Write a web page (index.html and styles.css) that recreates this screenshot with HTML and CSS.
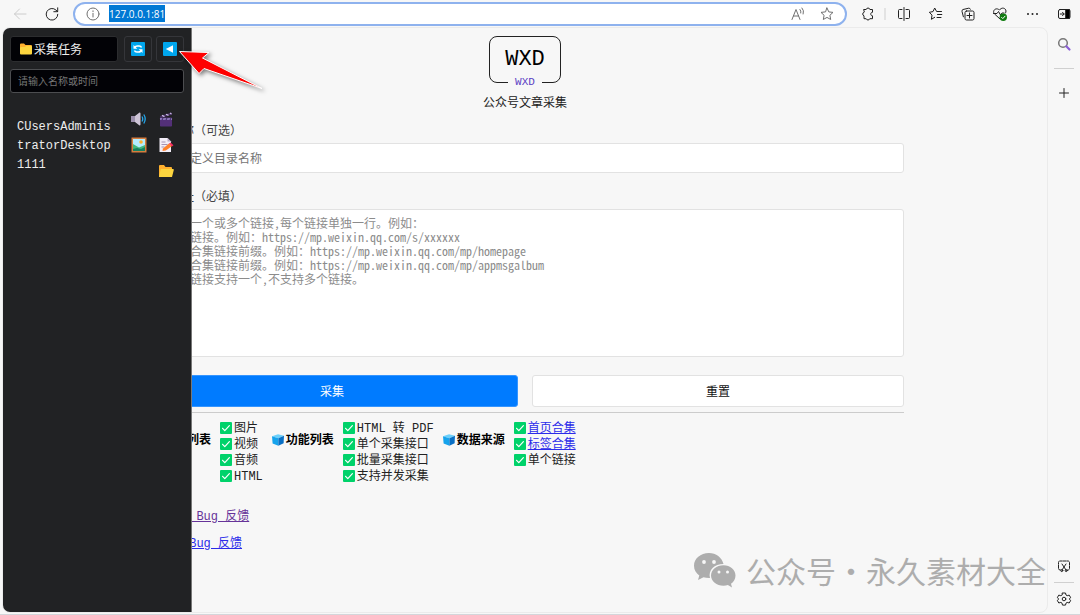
FILE: index.html
```html
<!DOCTYPE html>
<html lang="zh-CN">
<head>
    <meta charset="UTF-8">
    <meta name="viewport" content="width=device-width, initial-scale=1.0">
    <title>公众号文章采集</title>
    <link rel="stylesheet" href="styles.css">
</head>
<body>
    <!-- shared icons -->
    <svg class="sprite" aria-hidden="true">
        <symbol id="check" viewBox="0 0 12 12">
            <rect width="12" height="12" rx="1" fill="#00d26a"></rect>
            <path d="M2.6 6.3l2.2 2.3 4.6-5" fill="none" stroke="#fff" stroke-width="1.2" stroke-linecap="round" stroke-linejoin="round"></path>
        </symbol>
        <symbol id="cube" viewBox="0 0 12 12">
            <path d="M0 2.2L6 .2l6 1.600-5.600 2.500z" fill="#6cd0fb"></path>
            <path d="M0 2.2l6.400 2.100v7.500L.6 9.600z" fill="#16a3ec"></path>
            <path d="M12 1.800l-.4 7.400-5.200 2.600V4.300z" fill="#0a6fc4"></path>
        </symbol>
    </svg>

    <header class="toolbar">
        <button class="tool" title="返回">
            <svg class="icon faded" viewBox="0 0 16 16"><path d="M14 8H2.5M7.5 3L2.5 8l5 5"></path></svg>
        </button>
        <button class="tool" title="刷新">
            <svg class="icon" viewBox="0 0 16 16"><path d="M13.8 8.3A5.8 5.8 0 1 1 12 4.1L13.6 5.600M13.700 1.800v3.900h-3.900"></path></svg>
        </button>
        <div class="address">
            <svg class="icon gray" viewBox="0 0 16 16"><circle cx="8" cy="8" r="6"></circle><path d="M8 7.300v3.700M8 4.800v.8"></path></svg>
            <input class="url" type="text" value="127.0.0.1:81" aria-label="地址">
            <button class="address-tool" title="朗读">
                <svg class="icon gray" viewBox="0 0 16 16"><path d="M2 13.500L6 3.500l4 10M3.500 10h5M10 3.500q1.300 1.500.8 3.500M12 2q2.400 2.500 1.200 6"></path></svg>
            </button>
            <button class="address-tool" title="收藏">
                <svg class="icon gray" viewBox="0 0 16 16"><path d="M8 2l1.800 3.900 4.200.5-3.100 2.900.8 4.200L8 11.400l-3.700 2.100.8-4.200L2 6.400l4.200-.5z"></path></svg>
            </button>
        </div>
        <button class="tool" title="扩展">
            <svg class="icon" viewBox="0 0 16 16"><path d="M4 3.500h2.200a1.900 1.900 0 0 1 3.700 0h2.600v2.800c-2.300-.2-2.300 3.700 0 3.500v2.900H9.800a1.900 1.900 0 0 1-3.600 0H4V9.800a1.900 1.900 0 0 1 0-3.600z"></path></svg>
        </button>
        <span class="divider"></span>
        <button class="tool" title="分屏">
            <svg class="icon" viewBox="0 0 16 16"><path d="M6 3.500H3.500a1 1 0 0 0-1 1v7a1 1 0 0 0 1 1H6M10 3.500h2.500a1 1 0 0 1 1 1v7a1 1 0 0 1-1 1H10M8 1.500v13"></path></svg>
        </button>
        <button class="tool" title="收藏夹">
            <svg class="icon" viewBox="0 0 16 16"><path d="M13.500 5.500H8.600L6.700 2 5 5.600l-3.700.7 2.700 2.800-.6 4.200 3.300-2M9.500 8.500h4.300M9 11.500h4"></path></svg>
        </button>
        <button class="tool" title="集锦">
            <svg class="icon" viewBox="0 0 16 16"><rect x="5" y="5" width="9" height="9" rx="1.500"></rect><path d="M9.500 7v5M7 9.500h5M3.400 10.800L2 5.400Q1.700 4 3 3.500l5.700-1.300q1.300-.2 1.700 1"></path></svg>
        </button>
        <button class="tool" title="浏览器概要">
            <svg class="icon" viewBox="0 0 16 16"><path d="M8 13L2.400 7.800C-.1 5 3.800.8 7.400 4 11-.2 15.800 3.500 13.500 7M1.500 7.500H5l1.500-2 2 3.500L10 7h2"></path><circle cx="11.300" cy="11.300" r="3.700" fill="#107c10" stroke="none"></circle><path d="M9.600 11.400l1.200 1.200 2.200-2.400" stroke="#fff"></path></svg>
        </button>
        <button class="tool" title="更多">
            <svg class="icon" viewBox="0 0 16 16"><g fill="#222" stroke="none"><circle cx="4" cy="8" r="1"></circle><circle cx="8.500" cy="8" r="1"></circle><circle cx="13" cy="8" r="1"></circle></g></svg>
        </button>
        <button class="tool" title="侧栏">
            <svg class="icon" viewBox="0 0 16 16"><rect x="2.500" y="3.500" width="11.500" height="9" rx="1.500"></rect><path d="M10 3.500h3.500v9H10z" fill="#000"></path><path d="M4.300 8h3.700M6.500 6.300L8.200 8 6.500 9.700"></path></svg>
        </button>
    </header>

    <div class="window">
        <div class="viewport">
            <main class="page">
                <div class="brand">
                    <div class="logo">WXD<span class="logo-tag">WXD</span></div>
                    <p class="caption">公众号文章采集</p>
                </div>

                <form>
                    <label class="label" for="name">目录名称（可选）</label>
                    <input class="field" id="name" type="text" placeholder="可以自定义目录名称">

                    <label class="label" for="links">文章地址（必填）</label>
                    <textarea class="field links" id="links" placeholder="请输入一个或多个链接，每个链接单独一行。例如：
1.单个链接。例如：https://mp.weixin.qq.com/s/xxxxxx
2.首页合集链接前缀。例如：https://mp.weixin.qq.com/mp/homepage
3.标签合集链接前缀。例如：https://mp.weixin.qq.com/mp/appmsgalbum
4.合集链接支持一个，不支持多个链接。"></textarea>

                    <div class="actions">
                        <button class="btn primary" type="submit">采集</button>
                        <button class="btn" type="reset">重置</button>
                    </div>
                </form>

                <div class="features">
                    <h2><svg class="mark"><use href="#cube"></use></svg>格式列表</h2>
                    <ul>
                        <li><svg class="mark"><use href="#check"></use></svg>图片</li>
                        <li><svg class="mark"><use href="#check"></use></svg>视频</li>
                        <li><svg class="mark"><use href="#check"></use></svg>音频</li>
                        <li><svg class="mark"><use href="#check"></use></svg>HTML</li>
                    </ul>
                    <h2><svg class="mark"><use href="#cube"></use></svg>功能列表</h2>
                    <ul>
                        <li><svg class="mark"><use href="#check"></use></svg>HTML 转 PDF</li>
                        <li><svg class="mark"><use href="#check"></use></svg>单个采集接口</li>
                        <li><svg class="mark"><use href="#check"></use></svg>批量采集接口</li>
                        <li><svg class="mark"><use href="#check"></use></svg>支持并发采集</li>
                    </ul>
                    <h2><svg class="mark"><use href="#cube"></use></svg>数据来源</h2>
                    <ul>
                        <li><svg class="mark"><use href="#check"></use></svg><a href="#home">首页合集</a></li>
                        <li><svg class="mark"><use href="#check"></use></svg><a href="#tag">标签合集</a></li>
                        <li><svg class="mark"><use href="#check"></use></svg>单个链接</li>
                    </ul>
                </div>

                <div class="feedback">
                    <a class="seen" href="#github">GitHub Bug 反馈</a>
                    <a href="#gitee">Gitee Bug 反馈</a>
                </div>
            </main>

            <aside class="drawer">
                <div class="drawer-head">
                    <h1 class="drawer-title">
                        <svg class="folder" viewBox="0 0 12 12"><path d="M0 1.500Q0 .5 1 .5h3l1.500 1.500H11q1 0 1 1V10H0z" fill="#ffb02e"></path><path d="M0 5q0-1 1-1h4l1-1h5q1 0 1 1v6.500q0 1-1 1H1q-1 0-1-1z" fill="#fcd53f"></path></svg>采集任务
                    </h1>
                    <button class="square" title="刷新">
                        <svg viewBox="0 0 14 14"><rect width="14" height="14" rx="1" fill="#00a6ed"></rect><path d="M3.500 6Q4 4 6.500 4h1.700q1.800 0 2.300 1.500M10.500 8q-.5 2-3 2H5.800Q4 10 3.500 8.500" fill="none" stroke="#fff" stroke-width="1.500"></path><path d="M2.500 3v3.800h3.800zM11.500 11V7.200H7.700z" fill="#fff"></path></svg>
                    </button>
                    <button class="square" title="收起">
                        <svg viewBox="0 0 14 14"><rect width="14" height="14" rx="1" fill="#00a6ed"></rect><path d="M2.800 7L10 3.300v7.400z" fill="#fff"></path></svg>
                    </button>
                </div>
                <input class="search" type="text" placeholder="请输入名称或时间" aria-label="请输入名称或时间">
                <div class="task">
                    <span class="task-name">CUsersAdministratorDesktop1111</span>
                    <div class="task-tools">
                        <button title="音频">
                            <svg viewBox="0 0 16 16"><path d="M0 5h4l4.500-3.500q1 0 1 1v11q0 1-1 1L4 11H0z" fill="#cdc4d6"></path><path d="M0 5h4v6H0z" fill="#9b8fab"></path><path d="M11 5.500q1.500 2.500 0 5M12.800 3.500q2.800 4.500 0 9" fill="none" stroke="#26a6e8" stroke-width="1.300"></path></svg>
                        </button>
                        <button title="视频">
                            <svg viewBox="0 0 16 16"><path d="M2 5l11.500-3.500.5 2.200L2.500 7z" fill="#46305f"></path><path d="M4 4.400l2.500 1.200M8 3.200l2.500 1.200M12 2l1.500 1" stroke="#c9b9e5" stroke-width="1.200"></path><rect x="2" y="6.500" width="12" height="9" rx=".8" fill="#533078"></rect><path d="M2 7h12v2H2z" fill="#8b75b8"></path><path d="M5 7l-1 2M9 7L8 9M13 7l-1 2" stroke="#3d2560"></path></svg>
                        </button>
                        <button title="图片">
                            <svg viewBox="0 0 16 16"><path d="M.5.500h15v15H.5z" fill="#d67d3e"></path><path d="M2 2h12v12H2z" fill="#b4ecff"></path><circle cx="10" cy="5" r="1.800" fill="#ffb02e"></circle><path d="M2 7l6 3.500 6-2.500v6H2z" fill="#44b77c"></path><path d="M2 12l4-1 4 1 4-2v4H2z" fill="#168060"></path></svg>
                        </button>
                        <button title="文档">
                            <svg viewBox="0 0 16 16"><path d="M1.500 1h8l3.500 3.500V15H1.500z" fill="#f3eef8"></path><path d="M9.500 1v3.500H13z" fill="#b9aac7"></path><path d="M3.500 5h4M3.500 7.500h6M3.500 10h3" stroke="#a694b7"></path><path d="M5 11.500l6-5 2.800 2.800-6 4.200L4.500 14z" fill="#ff822d"></path><path d="M11 6.500l1.500-1 3 2.700-1.700 1.400z" fill="#f92f60"></path></svg>
                        </button>
                        <button class="last" title="打开目录">
                            <svg viewBox="0 0 16 16"><path d="M1 14V3q0-1 1-1h4l1.500 2H13q1 0 1 1v9z" fill="#ffb02e"></path><path d="M3.500 6H15q1 0 .8 1L14 14H1L2.500 7q.2-1 1-1z" fill="#fcd53f"></path></svg>
                        </button>
                    </div>
                </div>
            </aside>
        </div>

        <nav class="rail">
            <button title="搜索"><svg class="icon" viewBox="0 0 16 16"><circle cx="7" cy="7" r="4.300" stroke="#777" stroke-width="1.500"></circle><path d="M10.300 10.300L13.500 13.500" stroke="#8b5fd6" stroke-width="2.200"></path></svg></button>
            <hr>
            <button title="添加"><svg class="icon" viewBox="0 0 16 16"><path d="M8 3.500v9M3.500 8h9"></path></svg></button>
            <span class="spacer"></span>
            <button title="截图"><svg class="icon" viewBox="0 0 16 16"><path d="M4.500 12H4q-1.500 0-1.500-1.500v-6Q2.500 3 4 3h8q1.500 0 1.500 1.500v6q0 1.500-1.500 1.500h-.5" stroke-dasharray="2.500 1"></path><path d="M6 6l4 6M10 6l-4 6"></path><circle cx="5.800" cy="12.600" r="1"></circle><circle cx="10.200" cy="12.600" r="1"></circle></svg></button>
            <hr>
            <button title="设置"><svg class="icon" viewBox="0 0 16 16"><path d="M6.500 2h3l.5 2 1.200.7 2-.6 1.500 2.600L13.200 8l1.500 1.400-1.500 2.600-2-.6-1.200.7-.5 2h-3l-.5-2-1.200-.7-2 .6-1.500-2.600L2.800 8 1.300 6.700l1.500-2.600 2 .6L6 4z"></path><circle cx="8" cy="8" r="1.800"></circle></svg></button>
        </nav>
    </div>

    <svg class="pointer" viewBox="0 0 95 52">
        <path d="M4.500 6.500L34 7.500 27.500 13 87 43.500 29 23.500 24 28.500z" fill="#fe0000" stroke="#fff" stroke-width="1"></path>
    </svg>

    <div class="watermark">
        <svg viewBox="0 0 42 35"><path d="M15 0C6.500 0 0 5.600 0 12.700c0 4 2 7.400 5.300 9.700L4 27l5.500-2.700q2.700.9 6.500.8C14 17 20.500 11 29.500 11 28 4.500 22 0 15 0z" fill="#adadad"></path><path d="M29.500 12.200C22.500 12.200 17 16.800 17 22.500s5.500 10.300 12.500 10.300q2.300 0 4.400-.7L38 34.500l-1-3.700c2.700-2 4.500-4.900 4.500-8.300 0-5.700-5.300-10.300-12-10.300z" fill="#adadad"></path><g fill="#f7f7f7"><circle cx="10" cy="9" r="1.900"></circle><circle cx="20" cy="9" r="1.900"></circle><circle cx="25" cy="19" r="1.500"></circle><circle cx="33.500" cy="19" r="1.500"></circle></g></svg>
        <span>公众号</span><span>·</span><span>永久素材大全</span>
    </div>
</body>
</html>
```
FILE: styles.css
```css
* {
    margin: 0;
    padding: 0;
    box-sizing: border-box;
}

body {
    display: flex;
    flex-direction: column;
    height: 100vh;
    overflow: hidden;
    background-color: #f7f7f7;
    border-bottom: 1px solid #d3d6da;
    font-family: "Liberation Mono", "Noto Sans CJK SC", monospace;
    font-size: 12px;
    color: #222;
}

button,
input,
textarea {
    font-family: "Noto Sans CJK SC", sans-serif;
    font-size: 12px;
}

button {
    display: flex;
    align-items: center;
    justify-content: center;
    background-color: transparent;
    border: none;
    cursor: pointer;
}

.sprite {
    position: absolute;
    width: 0;
    height: 0;
}

.icon {
    width: 16px;
    height: 16px;
    fill: none;
    stroke: #222;
    stroke-width: 1;
    stroke-linecap: round;
    stroke-linejoin: round;
}

.icon.gray {
    stroke: #707070;
}

.icon.faded {
    stroke: #ccc;
}

/* browser bar */
.toolbar {
    display: flex;
    align-items: center;
    height: 27px;
    padding-left: 4px;
}

.tool {
    width: 32px;
    height: 26px;
}

.address {
    flex: 1;
    display: flex;
    align-items: center;
    height: 24px;
    margin: 0 5px;
    padding: 0 4px 0 10px;
    background-color: #fff;
    border: 2px solid #8eb2ee;
    border-radius: 12px;
}

.url {
    width: 56px;
    height: 17px;
    margin: 0 auto 0 8px;
    border: none;
    background-color: #0078d4;
    color: #fff;
    font-family: "Open Sans", sans-serif;
    font-size: 10px;
}

.address-tool {
    width: 29px;
}

.divider {
    width: 2px;
    height: 12px;
    margin-right: 2px;
    background-color: #e3e3e3;
}

/* page and side rail */
.window {
    flex: 1;
    display: flex;
    min-height: 0;
    padding: 0 0 1px 2px;
}

.viewport {
    position: relative;
    flex: 1;
    overflow: hidden;
    border: 1px solid #ebebeb;
    border-radius: 8px;
}

.rail {
    display: flex;
    flex-direction: column;
    align-items: center;
    width: 32px;
}

.rail button {
    width: 32px;
    height: 34px;
}

.rail hr {
    width: 20px;
    border: none;
    border-top: 1px solid #d0d0d0;
    margin: 7px 0;
}

.rail .spacer {
    flex: 1;
}

.rail .spacer ~ button {
    height: 28px;
}

.rail .spacer ~ hr {
    margin: 2px 0;
}

.page {
    padding: 8px 143px 0;
}

.brand {
    display: flex;
    flex-direction: column;
    align-items: center;
}

.logo {
    position: relative;
    width: 72px;
    height: 47px;
    border: 1px solid #222;
    border-radius: 8px;
    font-size: 22px;
    line-height: 45px;
    text-align: center;
    color: #000;
}

.logo-tag {
    position: absolute;
    left: 18px;
    bottom: -6px;
    width: 34px;
    background-color: #f7f7f7;
    color: #5b3fc4;
    font-size: 11px;
    line-height: 12px;
}

.caption {
    margin-top: 12px;
    line-height: 18px;
}

.label {
    display: block;
    margin-top: 8px;
    padding-bottom: 4px;
    line-height: 18px;
    font-family: "Noto Sans CJK SC", sans-serif;
    color: #444;
}

.field {
    display: block;
    width: 100%;
    height: 30px;
    padding: 0 7px 2px;
    background-color: #fff;
    border: 1px solid #e2e2e2;
    border-radius: 3px;
}

.field + .label {
    margin-top: 14px;
}

.field::placeholder {
    color: #757575;
}

.links {
    height: 148px;
    padding: 6px 7px;
    resize: none;
    line-height: 14px;
    font-feature-settings: "hwid";
}

.links::placeholder {
    color: #8c8c8c;
}

.actions {
    display: grid;
    grid-template-columns: 1fr 1fr;
    gap: 14px;
    margin-top: 18px;
    padding-bottom: 5px;
    border-bottom: 1px solid #ccc;
}

.btn {
    height: 32px;
    padding-bottom: 1px;
    background-color: #fff;
    border: 1px solid #e2e2e2;
    border-radius: 3px;
    color: #111;
}

.btn.primary {
    background-color: #007bff;
    border-color: #3595ff;
    color: #fff;
}

.features {
    display: flex;
    gap: 9px;
    padding: 8px 3px 0;
    line-height: 16px;
}

.features h2 {
    margin-top: 12px;
    font-size: 12px;
    color: #000;
}

.features h2,
.features li {
    display: flex;
    align-items: center;
    gap: 2px;
    height: 16px;
    white-space: pre;
}

.features ul {
    list-style: none;
}

.mark {
    width: 12px;
    height: 12px;
    margin-bottom: 2px;
}

a {
    color: #2b2bea;
}

a.seen {
    color: #663399;
}

.feedback {
    display: flex;
    flex-direction: column;
    align-items: flex-start;
    gap: 11px;
    margin-top: 24px;
    line-height: 16px;
}

/* task drawer over the page */
.drawer {
    position: absolute;
    top: 0;
    bottom: 0;
    left: 0;
    width: 189px;
    padding: 8px 7px;
    background-color: #212224;
    border-right: 1px solid #777;
    color: #eee;
}

.drawer-head {
    display: flex;
    gap: 4px;
}

.drawer-title {
    flex: 1;
    display: flex;
    align-items: center;
    gap: 2px;
    margin-right: 2px;
    padding-left: 9px;
    background-color: #020206;
    border: 1px solid #2c2d2f;
    border-radius: 3px;
    font-size: 12px;
    font-weight: normal;
}

.folder {
    width: 12px;
    height: 12px;
}

.square {
    width: 28px;
    height: 26px;
    border: 1px solid #35363a;
    border-radius: 3px;
}

.square svg {
    width: 14px;
    height: 14px;
}

.search {
    width: 100%;
    height: 24px;
    margin-top: 7px;
    padding: 0 7px 2px;
    background-color: #020206;
    border: 1px solid #4c4d50;
    border-radius: 3px;
    color: #eee;
    font-size: 10px;
}

.search::placeholder {
    color: #757575;
}

.task {
    display: flex;
    justify-content: space-between;
    margin-top: 13px;
    padding-left: 7px;
}

.task-name {
    width: 95px;
    padding-top: 12px;
    line-height: 19px;
    word-break: break-all;
}

.task-tools {
    display: grid;
    grid-template-columns: 27px 27px;
    grid-auto-rows: 26px;
    margin-right: 5px;
}

.task-tools svg {
    width: 16px;
    height: 16px;
}

.task-tools .last {
    grid-column: 2;
}

.pointer {
    position: absolute;
    left: 175px;
    top: 45px;
    width: 95px;
    height: 52px;
    filter: drop-shadow(2px 2px 2px rgba(0, 0, 0, 0.5));
}

.watermark {
    position: absolute;
    right: 34px;
    bottom: 23px;
    display: flex;
    align-items: center;
    font-family: "Noto Sans CJK SC", sans-serif;
    font-size: 30px;
    line-height: 44px;
    color: #adadad;
}

.watermark svg {
    width: 42px;
    height: 35px;
    margin-right: 10px;
}
```
